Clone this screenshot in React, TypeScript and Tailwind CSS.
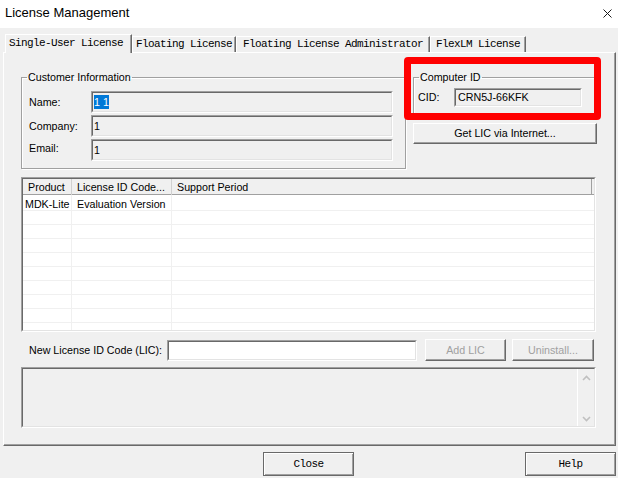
import clsx from "clsx";
import type { ReactNode } from "react";

// classic 3D edges
const raised =
  "border border-t-white border-l-white border-r-[#696969] border-b-[#696969] shadow-[inset_-1px_-1px_0_#a0a0a0]";

function Sunken({ className, inner, children }: { className?: string; inner?: string; children?: ReactNode }) {
  return (
    <div className={clsx("border border-t-[#a0a0a0] border-l-[#a0a0a0] border-r-white border-b-white", className)}>
      <div
        className={clsx(
          "h-full w-full border border-t-[#696969] border-l-[#696969] border-r-[#e3e3e3] border-b-[#e3e3e3]",
          inner
        )}
      >
        {children}
      </div>
    </div>
  );
}

function Group({ title, className, children }: { title: string; className?: string; children: ReactNode }) {
  return (
    <fieldset
      className={clsx(
        "border border-[#a0a0a0] shadow-[inset_1px_1px_0_white,1px_1px_0_white]",
        className
      )}
    >
      <legend className="ml-[5px] px-[1px] leading-[14px]">{title}</legend>
      {children}
    </fieldset>
  );
}

const tabs = ["Floating License", "Floating License Administrator", "FlexLM License"];
const tabWidths = ["w-[104px]", "w-[194px]", "w-[96px]"];

const fields = [
  { label: "Name:", value: "1 1", selected: true },
  { label: "Company:", value: "1" },
  { label: "Email:", value: "1" },
];

export default function App() {
  return (
    <div className="relative h-[478px] w-[618px] overflow-hidden bg-[#f0f0f0] font-['Liberation_Sans',Arial,sans-serif] text-[10.7px] text-black">
      {/* Title bar */}
      <div className="flex h-[28px] items-center justify-between bg-white pb-[2px] pl-[5px] pr-[5px]">
        <span className="text-[13px]">License Management</span>
        <svg width="9" height="9" viewBox="0 0 9 9" className="mr-[1px] mt-[1px]">
          <path d="M0.5 0.5 L8.5 8.5 M8.5 0.5 L0.5 8.5" stroke="#1a1a1a" strokeWidth="1" />
        </svg>
      </div>

      {/* Tabs */}
      <div className="relative z-10 -mb-px flex h-[25px] items-end pl-[5px] font-['Liberation_Mono',monospace] text-[11px] tracking-[-0.6px]">
        <div className="flex h-[19px] w-[127px] items-center border-l border-t border-white border-r border-r-[#696969] bg-[#f0f0f0] pb-[1px] pl-[3px] shadow-[inset_-1px_0_0_#a0a0a0]">
          Single-User License
        </div>
        {tabs.map((t, i) => (
          <div
            key={t}
            className={clsx(
              "mb-px flex h-[16px] items-center justify-center border-l border-t border-white border-r border-r-[#696969] shadow-[inset_-1px_0_0_#a0a0a0]",
              tabWidths[i]
            )}
          >
            {t}
          </div>
        ))}
      </div>

      {/* Tab page */}
      <div className="ml-[3px] h-[394px] w-[613px] border border-l-white border-t-white border-r-[#696969] border-b-[#696969] pl-[17px] pt-[17px] shadow-[inset_-1px_-1px_0_#a0a0a0]">
        <div className="flex h-[99px]">
          <Group title="Customer Information" className="h-[99px] w-[385px]">
            <div className="mt-[7px] flex flex-col gap-[2px]">
              {fields.map((f, i) => (
                <div key={f.label} className="flex h-[22px] items-center">
                  <span className={clsx("w-[69px] pl-[7px]", i === 2 && "mb-[4px]")}>{f.label}</span>
                  <Sunken className="h-[22px] w-[302px]" inner="flex items-center pl-[1px] bg-[#f0f0f0]">
                    <span className={clsx("leading-[14px]", f.selected && "bg-[#0078d7] text-white")}>{f.value}</span>
                  </Sunken>
                </div>
              ))}
            </div>
          </Group>

          <div className="ml-[7px] flex w-[184px] flex-col">
            <Group title="Computer ID" className="h-[46px] w-[182px]">
              <div className="mt-[4px] flex items-center">
                <span className="w-[40px] pl-[4px]">CID:</span>
                <Sunken className="h-[19px] w-[128px]" inner="flex items-center pl-[2px] bg-[#f0f0f0]">
                  CRN5J-66KFK
                </Sunken>
              </div>
            </Group>
            <button className={clsx("mt-[7px] h-[21px] w-[184px] bg-[#f0f0f0] pb-[1px]", raised)}>
              Get LIC via Internet...
            </button>
          </div>
        </div>

        {/* License list */}
        <Sunken className="mt-[8px] h-[155px] w-[575px]" inner="flex flex-col overflow-hidden bg-white">
          <div className="grid h-[16px] shrink-0 grid-cols-[49px_100px_1fr] border-b border-[#a0a0a0] bg-[#f0f0f0] pr-[2px]">
            <div className="flex items-center border-r border-[#d0d0d0] pl-[5px]">Product</div>
            <div className="flex items-center border-r border-[#d0d0d0] pl-[5px]">License ID Code...</div>
            <div className="flex items-center border-r border-[#a0a0a0] pl-[5px]">Support Period</div>
          </div>
          {Array.from({ length: 10 }).map((_, r) => (
            <div
              key={r}
              className={clsx(
                "grid shrink-0 grid-cols-[49px_100px_1fr] border-b border-[#f0f0f0]",
                r === 0 ? "h-[16px]" : "h-[14px]"
              )}
            >
              <div className="flex items-center border-r border-[#f0f0f0] pl-[2px] pt-[1px]">{r === 0 ? "MDK-Lite" : ""}</div>
              <div className="flex items-center border-r border-[#f0f0f0] pl-[5px] pt-[1px]">
                {r === 0 ? "Evaluation Version" : ""}
              </div>
              <div />
            </div>
          ))}
        </Sunken>

        {/* New LIC row */}
        <div className="mt-[7px] flex h-[22px] items-center">
          <span className="w-[146px] pl-[8px]">New License ID Code (LIC):</span>
          <Sunken className="h-[21px] w-[250px]" inner="bg-white" />
          <button className={clsx("ml-[8px] h-[22px] w-[81px] bg-[#f0f0f0] text-[#a0a0a0]", raised)}>Add LIC</button>
          <button className={clsx("ml-[6px] h-[22px] w-[82px] bg-[#f0f0f0] text-[#a0a0a0]", raised)}>
            Uninstall...
          </button>
        </div>

        {/* Message area */}
        <Sunken className="mt-[6px] h-[61px] w-[575px]" inner="flex justify-end bg-[#f0f0f0]">
          <div className="flex w-[17px] flex-col items-center justify-between border-l border-white pb-[4px] pt-[6px]">
            <svg width="9" height="6" viewBox="0 0 9 6">
              <path d="M1 5 L4.5 1.5 L8 5" fill="none" stroke="#c0c0c0" strokeWidth="1.6" />
            </svg>
            <svg width="9" height="6" viewBox="0 0 9 6">
              <path d="M1 1 L4.5 4.5 L8 1" fill="none" stroke="#c0c0c0" strokeWidth="1.6" />
            </svg>
          </div>
        </Sunken>
      </div>

      {/* Bottom buttons */}
      <div className="mt-[6px] flex font-['Liberation_Mono',monospace] text-[11px] tracking-[-0.6px]">
        <button className="ml-[263px] h-[24px] w-[91px] border border-[#696969] bg-[#f0f0f0] shadow-[inset_1px_1px_0_white,inset_-1px_-1px_0_#a0a0a0]">
          Close
        </button>
        <button className="ml-[171px] h-[24px] w-[91px] border border-[#696969] bg-[#f0f0f0] shadow-[inset_1px_1px_0_white,inset_-1px_-1px_0_#a0a0a0]">
          Help
        </button>
      </div>

      {/* red annotation */}
      <div className="pointer-events-none absolute left-[404px] top-[57px] h-[63px] w-[197px] rounded-[4px] border-[7px] border-[#ff0000]" />
    </div>
  );
}
